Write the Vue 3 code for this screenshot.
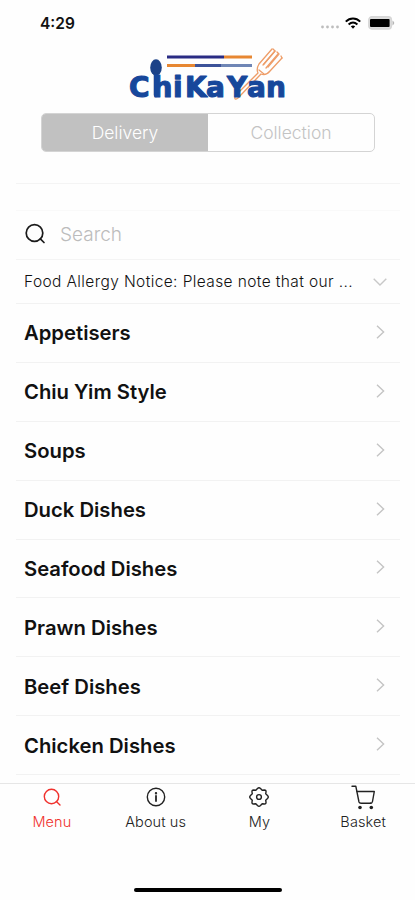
<template>
    <div class="app">
        <header class="status-bar">
            <span class="time">4:29</span>
            <div class="status-icons">
                <svg width="20" height="6" viewBox="0 0 20 6" fill="#bdbdbd">
                    <circle v-for="n in 4" :key="n" :cx="n * 5 - 2.5" cy="3" r="1.4" />
                </svg>
                <svg class="wifi" width="16" height="12" viewBox="0 0 16 12" fill="none" stroke="#000" stroke-width="2">
                    <path d="M0.8 4.6C5 0.4 11 0.4 15.2 4.6" />
                    <path d="M3.6 7.5C6.3 5 9.7 5 12.4 7.5" />
                    <path d="M5.8 9.3Q8 7.8 10.2 9.3L8 11.8Z" fill="#000" stroke="none" />
                </svg>
                <svg class="battery" width="27" height="14" viewBox="0 0 27 14">
                    <rect x="0.8" y="0.8" width="22.6" height="12.2" rx="3" fill="#ddd" stroke="#d6d6d6" stroke-width="1.4" />
                    <rect x="2" y="3" width="19.6" height="8" rx="1" fill="#000" />
                    <path d="M24.5 4.6Q28 7 24.5 9.4Z" fill="#b5b5b5" />
                </svg>
            </div>
        </header>

        <svg class="logo" width="185" height="60" viewBox="0 0 185 60">
            <!-- 筷子 -->
            <path d="M52 7H109" stroke="#292b83" stroke-width="3" />
            <path d="M109 7H137" stroke="#e78732" stroke-width="3" />
            <path d="M52 15.500H80" stroke="#e78732" stroke-width="3" />
            <path d="M80 15.500H137" stroke="#6f86b5" stroke-width="3" />
            <path d="M80 15.500H106" stroke="#3c5399" stroke-width="3" />
            <!-- 叉子 -->
            <g fill="none" stroke="#ee9d68" stroke-width="1.300" stroke-linecap="round" stroke-linejoin="round">
                <path d="M157 -1L144 14Q141 19 143 23L120 46Q119 51 123 48L146 24Q151 26 155 21L167 8" />
                <path d="M160 1L148 15M163 4L151 18" />
                <path d="M158 -1L160 1L149 14M162 2L164 4L153 17M166 6L167 8" />
                <path d="M144 20L149 24" />
            </g>
            <!-- 勺子 -->
            <ellipse cx="41" cy="17.500" rx="5.800" ry="8.300" fill="#1c4288" />
            <path d="M41 24V45" stroke="#1c4288" stroke-width="4.500" stroke-linecap="round" />
            <text y="47" :x="logoLetters" class="logo-text">ChiKaYan</text>
        </svg>

        <div class="order-type">
            <button v-for="type in orderTypes" :key="type" @click="orderType = type"
                :class="['type-btn', orderType === type ? 'type-active' : '']">
                {{ type }}
            </button>
        </div>

        <main class="content">
            <div class="search">
                <svg width="22" height="22" viewBox="0 0 22 22" fill="none" stroke="#1b1b1b" stroke-width="1.700" stroke-linecap="round">
                    <circle cx="10.500" cy="10" r="8.300" />
                    <path d="M16.300 15.800L20 19.500" />
                </svg>
                <input v-model="keyword" type="text" placeholder="Search" />
            </div>
            <div class="notice">
                <span class="notice-text">Food Allergy Notice: Please note that our ...</span>
                <svg width="14" height="8" viewBox="0 0 14 8" fill="none" stroke="#c8c8c8" stroke-width="1.400">
                    <path d="M0.700 0.800L7 7L13.300 0.800" />
                </svg>
            </div>
            <div v-for="item in categories" :key="item" class="category">
                <span>{{ item }}</span>
                <svg width="9" height="14" viewBox="0 0 9 14" fill="none" stroke="#c4c4c4" stroke-width="1.400">
                    <path d="M1 0.700L7.600 7L1 13.300" />
                </svg>
            </div>
        </main>

        <!-- 底部导航 -->
        <nav class="tab-bar">
            <div v-for="tab in tabs" :key="tab" @click="activeTab = tab" :class="['tab', activeTab === tab ? 'tab-active' : '']">
                <svg width="28" height="28" viewBox="0 0 28 28" fill="none" stroke="currentColor" stroke-width="1.400"
                    stroke-linecap="round" stroke-linejoin="round">
                    <template v-if="tab === 'Menu'">
                        <circle cx="13.500" cy="12.500" r="7.200" />
                        <path d="M18.400 17.600L22 21" />
                    </template>
                    <template v-else-if="tab === 'About us'">
                        <circle cx="14" cy="13" r="8.700" />
                        <path d="M14 12V17" stroke-width="1.800" />
                        <circle cx="14" cy="9.200" r="0.500" />
                    </template>
                    <template v-else-if="tab === 'My'">
                        <path d="M12.500 4.500Q14 3 15.500 4.500L17.200 6.300L19.500 6Q21.200 6 21 8L20.700 9.800L22.500 11.500Q24 13 22.500 14.500L20.700 16.200L21 18.200Q21.200 20 19.500 20L17.200 19.700L15.500 21.500Q14 23 12.500 21.500L10.800 19.700L8.500 20Q6.800 20 7 18L7.300 16.200L5.500 14.500Q4 13 5.500 11.500L7.300 9.800L7 8Q6.800 6 8.500 6L10.800 6.300Z" />
                        <circle cx="14" cy="13" r="2.400" />
                    </template>
                    <template v-else>
                        <path d="M3 2.200H6.800L10 18Q10.400 19.300 12 19.300H22" />
                        <path d="M8 7.500H25.300L23.500 17.500Q23.200 19.300 21.500 19.300" />
                        <circle cx="11" cy="23.500" r="1.800" fill="currentColor" stroke="none" />
                        <circle cx="22.300" cy="23.500" r="1.800" fill="currentColor" stroke="none" />
                    </template>
                </svg>
                <span>{{ tab }}</span>
            </div>
        </nav>
        <div class="home-indicator"></div>
    </div>
</template>

<script setup>
import { ref } from 'vue';

const orderTypes = ['Delivery', 'Collection'];
const orderType = ref('Delivery');
const keyword = ref('');

const categories = [
    'Appetisers',
    'Chiu Yim Style',
    'Soups',
    'Duck Dishes',
    'Seafood Dishes',
    'Prawn Dishes',
    'Beef Dishes',
    'Chicken Dishes',
];

const tabs = ['Menu', 'About us', 'My', 'Basket'];
const activeTab = ref('Menu');

// logo 每个字母的横坐标
const logoLetters = '14 37.500 58 70 91 112 132 151';
</script>

<style>
body {
    background-color: #fefefe;
}
</style>

<style scoped>
.app {
    display: flex;
    flex-direction: column;
    height: 900px;
    overflow: hidden;
    font-family: Inter, "Liberation Sans", sans-serif;
    color: #111;
}

.status-bar {
    display: flex;
    flex: none;
    justify-content: space-between;
    align-items: center;
    height: 46px;
    padding: 0 20px 0 40px;
    box-sizing: border-box;
}

.time {
    font-size: 15.5px;
    font-weight: 600;
}

.status-icons {
    display: flex;
    align-items: center;
}

.status-icons svg:first-child {
    margin-top: 8px;
}

.wifi {
    margin-left: 5px;
}

.battery {
    margin-left: 7px;
}

.logo {
    flex: none;
    margin: 4px 0 0 115px;
    overflow: visible;
}

.logo-text {
    font-family: "DejaVu Sans", sans-serif;
    font-size: 28px;
    font-weight: 700;
    fill: #17479b;
    stroke: #17479b;
    stroke-width: 1.1;
    stroke-linejoin: round;
}

.order-type {
    display: flex;
    flex: none;
    height: 39px;
    margin: 3px 40px 0 41px;
    border: 1px solid #d4d4d4;
    border-radius: 5px;
    box-sizing: border-box;
    overflow: hidden;
}

.type-btn {
    flex: 1;
    padding: 0;
    border: none;
    background-color: transparent;
    color: #c3c3c3;
    font-family: inherit;
    font-size: 17.5px;
    font-weight: 300;
    cursor: pointer;
}

.type-active {
    background-color: #c1c1c1;
    color: #fff;
}

.content {
    flex: none;
    height: 600px;
    margin: 31px 15px 0 16px;
    border-top: 1px solid #f4f4f4;
    box-sizing: border-box;
    overflow: hidden;
}

.search {
    display: flex;
    align-items: center;
    height: 50px;
    margin-top: 26px;
    padding: 0 0 2px 8px;
    border-top: 1px solid #f9f9f9;
    border-bottom: 1px solid #f4f4f4;
    box-sizing: border-box;
}

.search input {
    flex: 1;
    margin-left: 14px;
    padding: 0;
    border: none;
    outline: none;
    background-color: transparent;
    font-family: inherit;
    font-size: 19px;
    font-weight: 300;
}

.search input::placeholder {
    color: #bcbcbc;
}

.notice {
    display: flex;
    justify-content: space-between;
    align-items: center;
    height: 44px;
    padding: 0 13px 0 8px;
    border-bottom: 1px solid #f2f2f2;
    box-sizing: border-box;
}

.notice-text {
    font-size: 15.5px;
    font-weight: 300;
    letter-spacing: 0.39px;
    white-space: nowrap;
}

.category {
    display: flex;
    justify-content: space-between;
    align-items: center;
    height: 58.88px;
    padding: 0 15px 0 8px;
    border-bottom: 1px solid #f2f2f2;
    box-sizing: border-box;
    font-size: 20.25px;
    font-weight: 600;
    cursor: pointer;
}

.category svg {
    margin-bottom: 2px;
}

.tab-bar {
    display: flex;
    flex: none;
    height: 105px;
    border-top: 1px solid #e6e6e6;
    box-sizing: border-box;
}

.tab {
    display: flex;
    flex: 1;
    flex-direction: column;
    align-items: center;
    color: #222;
    font-size: 14.5px;
    font-weight: 300;
    line-height: 20px;
    letter-spacing: 0.1px;
    cursor: pointer;
}

.tab-active {
    color: #f0312d;
}

.home-indicator {
    flex: none;
    width: 148px;
    height: 4px;
    margin: 0 auto;
    border-radius: 2px;
    background-color: #000;
}
</style>
